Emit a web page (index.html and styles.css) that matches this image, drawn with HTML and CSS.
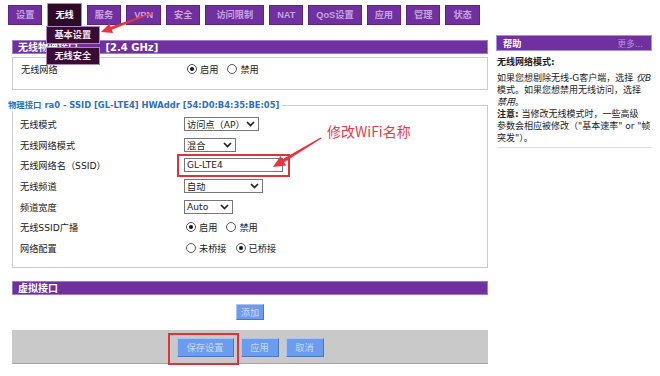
FILE: index.html
```html
<!DOCTYPE html>
<html lang="zh">
<head>
    <meta charset="UTF-8">
    <title>无线 - 基本设置</title>
    <link rel="stylesheet" href="styles.css">
</head>
<body>
    <div class="page">
        <ul class="tabs">
            <li>设置</li>
            <li class="active">无线
                <ul class="submenu">
                    <li>基本设置</li>
                    <li>无线安全</li>
                </ul>
            </li>
            <li>服务</li>
            <li>VPN</li>
            <li>安全</li>
            <li class="wide">访问限制</li>
            <li>NAT</li>
            <li>QoS设置</li>
            <li>应用</li>
            <li>管理</li>
            <li>状态</li>
        </ul>

        <div class="layout">
            <div class="main">
                <div class="bar">无线物理接口 <span class="freq">[2.4 GHz]</span></div>
                <div class="box">
                    <div class="row">
                        <span class="lbl">无线网络</span>
                        <span class="ctl">
                            <span class="radio on"></span>启用
                            <span class="radio"></span>禁用
                        </span>
                    </div>
                </div>

                <fieldset class="iface">
                    <legend>物理接口 ra0 - SSID [GL-LTE4] HWAddr [54:D0:B4:35:BE:05]</legend>
                    <div class="row">
                        <span class="lbl">无线模式</span>
                        <span class="select w-mode">访问点（AP）<svg width="9" height="6" viewBox="0 0 9 6"><path d="M1 1l3.5 3.5L8 1" fill="none" stroke="#222" stroke-width="1.7"/></svg></span>
                    </div>
                    <div class="row">
                        <span class="lbl">无线网络模式</span>
                        <span class="select w-net">混合<svg width="9" height="6" viewBox="0 0 9 6"><path d="M1 1l3.5 3.5L8 1" fill="none" stroke="#222" stroke-width="1.7"/></svg></span>
                    </div>
                    <div class="row">
                        <span class="lbl">无线网络名（SSID）</span>
                        <span class="mark mark-ssid"><input class="text" type="text" value="GL-LTE4"></span>
                    </div>
                    <div class="row">
                        <span class="lbl">无线频道</span>
                        <span class="select w-chan">自动<svg width="9" height="6" viewBox="0 0 9 6"><path d="M1 1l3.5 3.5L8 1" fill="none" stroke="#222" stroke-width="1.7"/></svg></span>
                    </div>
                    <div class="row">
                        <span class="lbl">频道宽度</span>
                        <span class="select w-width">Auto<svg width="9" height="6" viewBox="0 0 9 6"><path d="M1 1l3.5 3.5L8 1" fill="none" stroke="#222" stroke-width="1.7"/></svg></span>
                    </div>
                    <div class="row">
                        <span class="lbl">无线SSID广播</span>
                        <span class="ctl">
                            <span class="radio on"></span>启用
                            <span class="radio"></span>禁用
                        </span>
                    </div>
                    <div class="row">
                        <span class="lbl">网络配置</span>
                        <span class="ctl">
                            <span class="radio"></span>未桥接
                            <span class="radio on"></span>已桥接
                        </span>
                    </div>
                </fieldset>

                <div class="bar bar-virtual">虚拟接口</div>
                <div class="add-row"><button class="btn">添加</button></div>

                <div class="actions">
                    <span class="mark mark-save"><button class="btn btn-wide">保存设置</button></span>
                    <button class="btn">应用</button>
                    <button class="btn">取消</button>
                </div>
            </div>

            <div class="side">
                <div class="help-head">
                    <span>帮助</span>
                    <span class="more">更多...</span>
                </div>
                <div class="help-body">
                    <div class="help-title">无线网络模式:</div>
                    <p>
                        如果您想剔除无线-G客户端，选择 <i>仅B</i><br>
                        模式。如果您想禁用无线访问，选择<br>
                        <i>禁用</i>。<br>
                        <b>注意:</b> 当修改无线模式时，一些高级<br>
                        参数会相应被修改（"基本速率" or "帧<br>
                        突发"）。
                    </p>
                </div>
            </div>
        </div>

        <!-- 标注箭头 -->
        <svg class="marks" width="660" height="376" viewBox="0 0 660 376">
            <polygon fill="#e8343c" points="151.8,12.4 110.7,26.7 109.6,23.5 101,32 113,32.9 111.9,29.7 152.2,13.6"/>
            <polygon fill="#e8343c" points="320.6,137.4 282.4,159.3 280.5,156.1 273,167 286.1,165.5 284.2,162.3 321.4,138.6"/>
        </svg>
        <div class="note">修改WiFi名称</div>
    </div>
</body>
</html>
```

FILE: styles.css
```css
body {
    margin: 0;
    background: #fff;
    color: #222;
    font-family: "DejaVu Sans", "Noto Sans CJK SC", sans-serif;
    font-size: 9.2px;
}
.page {
    position: relative;
    width: 660px;
    height: 376px;
    overflow: hidden;
}

/* 顶部菜单 */
.tabs {
    display: flex;
    gap: 5px;
    margin: 0;
    padding: 5px 0 0 8px;
    list-style: none;
    height: 20px;
}
.tabs > li {
    box-sizing: border-box;
    height: 20px;
    padding: 0 7px;
    line-height: 18px;
    background: #7030a0;
    border: 1px solid #5b2484;
    color: #c4a6de;
    font-family: "Liberation Sans", "Noto Sans CJK SC", sans-serif;
    font-weight: bold;
    white-space: nowrap;
}
.tabs > li.wide {
    padding: 0 10px;
}
.tabs > li.active {
    position: relative;
    height: 24px;
    margin-top: -2px;
    line-height: 22px;
    background: #2c0a2a;
    border-color: #a58ac4;
    color: #fff;
}
.submenu {
    position: absolute;
    top: 100%;
    left: -2px;
    z-index: 2;
    margin: 0;
    padding: 0;
    list-style: none;
    width: 54px;
}
.submenu li {
    box-sizing: border-box;
    height: 18px;
    margin-bottom: 3px;
    padding-left: 7px;
    line-height: 16px;
    background: #3a0c34;
    border: 1px solid #a58ac4;
    color: #f3eaf6;
}

.layout {
    display: flex;
    gap: 8px;
    padding-left: 12px;
}
.main {
    width: 476px;
    margin-top: 15px;
}
.side {
    width: 156px;
    margin-top: 10px;
}

.bar {
    box-sizing: border-box;
    height: 14px;
    padding-left: 5px;
    line-height: 13px;
    background: #7030a0;
    border: 1px solid #9c7cc8;
    color: #fff;
    font-size: 10px;
    font-weight: bold;
}
.bar .freq {
    margin-left: 24px;
}
.box {
    box-sizing: border-box;
    height: 33px;
    margin-top: 3px;
    padding: 1px 0 0 8px;
    border: 1px solid #ccc;
}
.row {
    display: flex;
    align-items: center;
    height: 20.6px;
}
.lbl {
    width: 164px;
    flex: none;
}
.ctl {
    display: flex;
    align-items: center;
    gap: 3px;
    padding-left: 2px;
}
.radio {
    box-sizing: border-box;
    display: inline-flex;
    align-items: center;
    justify-content: center;
    width: 10px;
    height: 10px;
    border: 1px solid #555;
    border-radius: 50%;
    background: #fff;
}
.ctl .radio:not(:first-child) {
    margin-left: 6px;
}
.radio.on::before {
    content: "";
    width: 4px;
    height: 4px;
    border-radius: 50%;
    background: #111;
}

.iface {
    margin: 9px 0 0;
    padding: 3px 0 9px 7px;
    border: 1px solid #ccc;
    min-width: 0;
}
.iface legend {
    margin-left: -13px;
    padding: 0 3px 0 1px;
    line-height: 12px;
    color: #2f6fc2;
    font-size: 8.4px;
    font-weight: bold;
}
.select {
    box-sizing: border-box;
    display: inline-flex;
    align-items: center;
    justify-content: space-between;
    height: 14px;
    padding: 0 3px 0 2px;
    border: 1px solid #777;
    background: #fff;
}
.w-mode { width: 75px; }
.w-net { width: 52px; }
.w-chan { width: 79px; }
.w-width { width: 49px; }

.text {
    box-sizing: border-box;
    width: 99px;
    height: 14px;
    margin: 0;
    padding: 0 2px;
    border: 1px solid #777;
    font: 9px "DejaVu Sans", sans-serif;
    color: #222;
}

/* 红框标注 */
.mark {
    position: relative;
    display: inline-flex;
}
.mark::after {
    content: "";
    position: absolute;
    border: 2px solid #e0323a;
}
.mark-ssid::after {
    top: -4px;
    right: -7px;
    bottom: -5px;
    left: -7px;
}
.mark-save::after {
    top: -5px;
    right: -5px;
    bottom: -8px;
    left: -9px;
}

.bar-virtual {
    margin-top: 13px;
}
.add-row {
    display: flex;
    justify-content: center;
    padding: 9px 0 10px;
}
.btn {
    box-sizing: border-box;
    height: 16px;
    margin: 0;
    padding: 0 4px;
    background: #6c9ced;
    border: 1px solid;
    border-color: #a9c3f4 #4d76c2 #4d76c2 #a9c3f4;
    color: #c7d8f8;
    font: 9.2px "DejaVu Sans", "Noto Sans CJK SC", sans-serif;
}
.actions {
    display: flex;
    justify-content: center;
    align-items: center;
    gap: 7px;
    height: 34px;
    box-sizing: border-box;
    padding-top: 1px;
    background: #c9c9c9;
    border-bottom: 1px solid #a5a5a5;
}
.actions .btn {
    height: 19px;
    width: 38px;
}
.actions .btn-wide {
    width: 57px;
}

/* 帮助 */
.help-head {
    box-sizing: border-box;
    display: flex;
    justify-content: space-between;
    align-items: center;
    height: 16px;
    padding: 0 8px 0 6px;
    background: #7030a0;
    border: 1px solid #9d94e4;
    color: #fff;
    font-weight: bold;
}
.help-head .more {
    color: #b49ade;
    font-weight: normal;
    font-size: 8.6px;
}
.help-body {
    padding-left: 1px;
    font-size: 9px;
    line-height: 12px;
}
.help-title {
    margin-top: 5px;
    font-weight: bold;
}
.help-body p {
    margin: 4px 0 0;
    padding-bottom: 3px;
    border-bottom: 1px solid #ddd;
    white-space: nowrap;
}

.marks {
    position: absolute;
    top: 0;
    left: 0;
    z-index: 3;
    pointer-events: none;
}
.note {
    position: absolute;
    top: 122px;
    left: 327px;
    color: #e2404e;
    font: 14px/18px "Noto Sans CJK SC", sans-serif;
}
```
